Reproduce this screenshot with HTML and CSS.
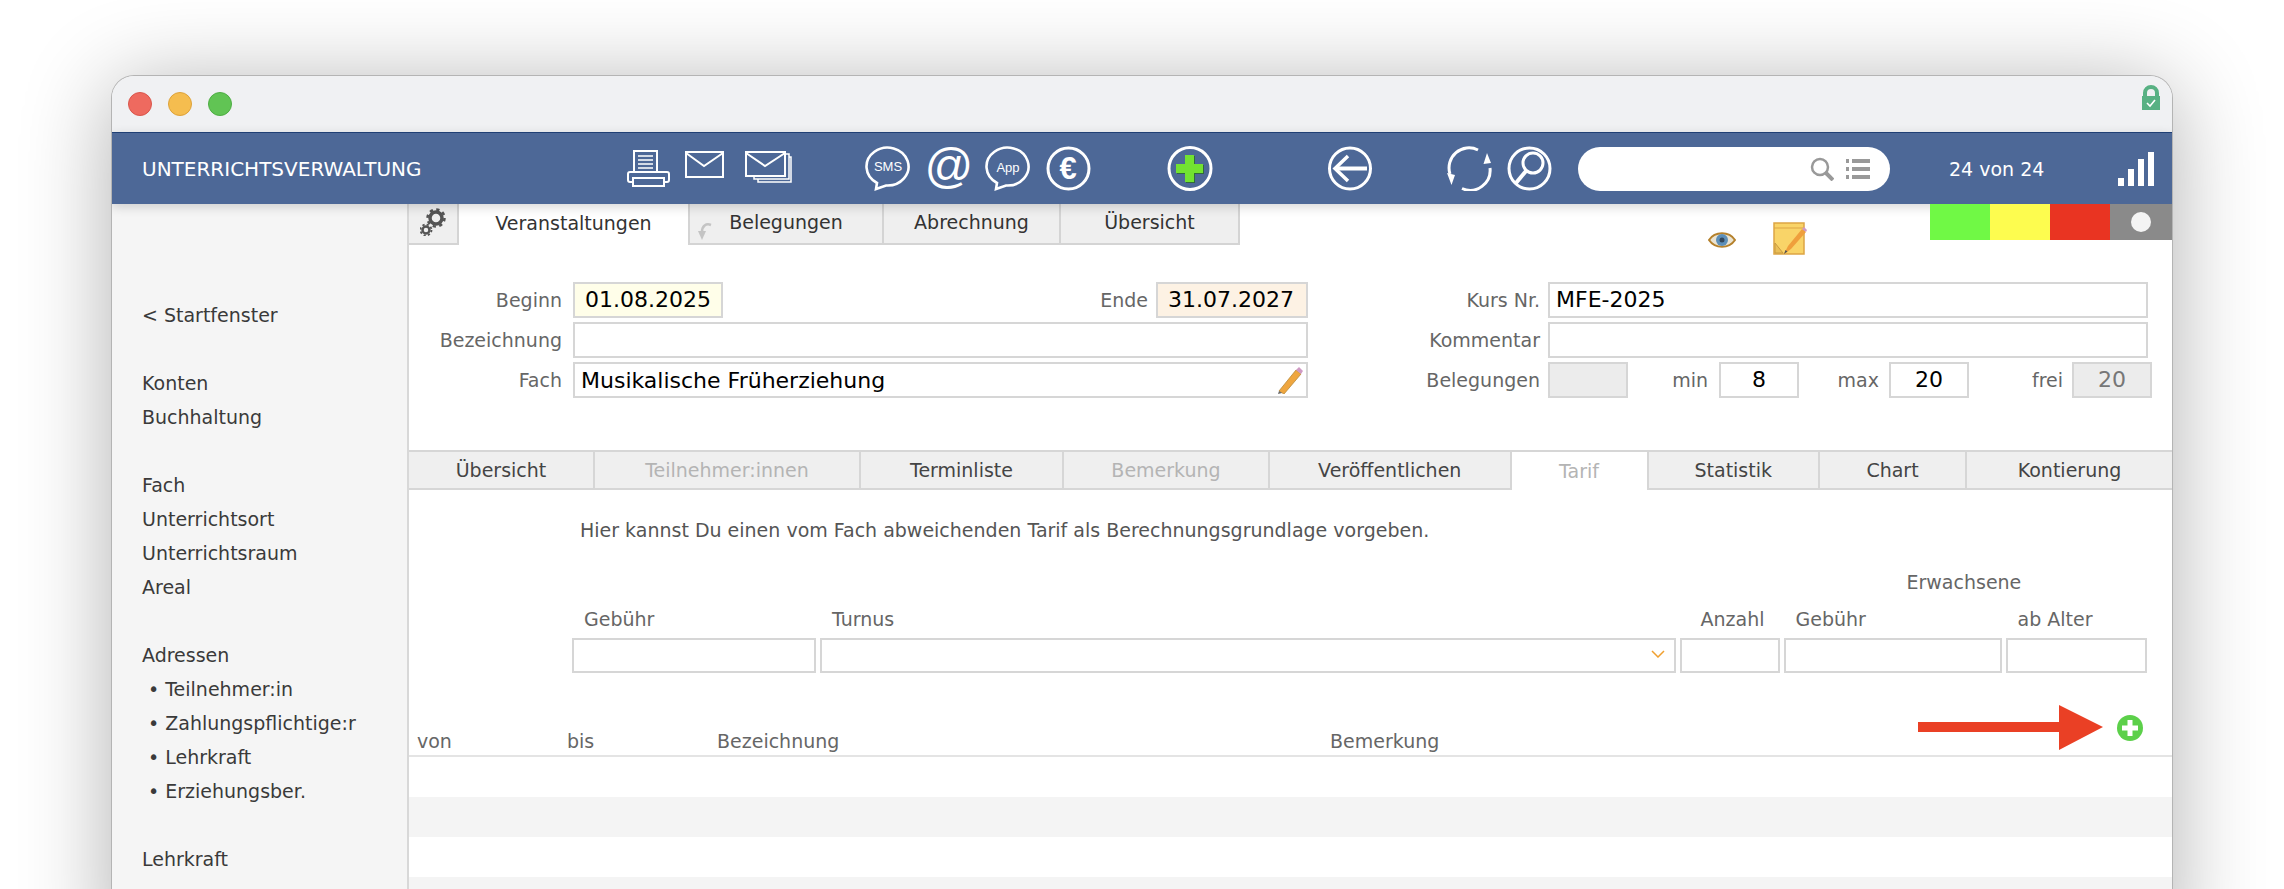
FILE: index.html
```html
<!DOCTYPE html>
<html lang="de">
  <head>
    <meta charset="UTF-8" />
    <title>Unterrichtsverwaltung</title>
    <link rel="stylesheet" href="styles.css">
  </head>
  <body>
    <div class="window">
      <div class="titlebar">
        <div class="lights"><span class="red"></span><span class="yellow"></span><span class="green"></span></div>
        <svg class="lock" width="18" height="25" viewBox="0 0 18 25">
          <path d="M3 12V8a6 6 0 0 1 12 0v4" fill="none" stroke="#58b183" stroke-width="4"/>
          <rect y="11" width="18" height="14" fill="#58b183"/>
          <path d="M5 18l3 3 5-6" fill="none" stroke="#fff" stroke-width="1.6"/>
        </svg>
      </div>

      <div class="header">
        <div class="app-title">UNTERRICHTSVERWALTUNG</div>

        <div class="icons group-print">
          <svg width="43" height="37" viewBox="0 0 43 37" fill="none" stroke="#fff" stroke-width="2">
            <path d="M7 22V1h23v21"/>
            <path d="M11 6h15M11 10h15M11 14h15M11 18h15" stroke-width="1.6"/>
            <rect x="1" y="22" width="41" height="10" rx="2"/>
            <rect x="6" y="28" width="31" height="8" fill="#4d6897"/>
          </svg>
          <svg width="39" height="27" viewBox="0 0 39 27" fill="none" stroke="#fff" stroke-width="2">
            <rect x="1" y="1" width="37" height="25"/>
            <path d="M1 2l18 13L38 2"/>
          </svg>
          <svg class="mail-stack" width="47" height="32" viewBox="0 0 47 32" fill="none" stroke="#fff" stroke-width="2">
            <path d="M41 3h3v25H9v-2M44 6h2v25H13v-3" stroke-width="1.5"/>
            <rect x="1" y="1" width="39" height="24" fill="#4d6897"/>
            <path d="M1 2l19 13L40 2"/>
          </svg>
        </div>

        <div class="icons group-contact">
          <svg width="46" height="45" viewBox="0 0 46 45">
            <path d="M12 37A21 19 0 1 1 21 39.500L11 43Z" fill="none" stroke="#fff" stroke-width="2.600"/>
            <text x="23" y="25" text-anchor="middle" class="bubble-text">SMS</text>
          </svg>
          <svg width="44" height="45" viewBox="0 0 44 45">
            <text x="22" y="36" text-anchor="middle" class="at-sign">@</text>
          </svg>
          <svg width="46" height="45" viewBox="0 0 46 45">
            <path d="M12 37A21 19 0 1 1 21 39.500L11 43Z" fill="none" stroke="#fff" stroke-width="2.600"/>
            <text x="23" y="26" text-anchor="middle" class="bubble-text">App</text>
          </svg>
          <svg width="45" height="45" viewBox="0 0 45 45">
            <circle cx="22.500" cy="22.500" r="20.500" fill="none" stroke="#fff" stroke-width="3"/>
            <text x="22" y="33" text-anchor="middle" class="euro">€</text>
          </svg>
        </div>

        <svg class="icon-add" width="46" height="45" viewBox="0 0 46 45">
          <circle cx="23" cy="22.500" r="21" fill="none" stroke="#fff" stroke-width="3"/>
          <path d="M19 10h9v9h9v9h-9v9h-9v-9h-9v-9h9z" fill="#2f6b3a"/>
          <path d="M18 9h9v9h9v9h-9v9h-9v-9h-9v-9h9z" fill="#72e231"/>
        </svg>

        <svg class="icon-back" width="44" height="45" viewBox="0 0 44 45" fill="none" stroke="#fff">
          <circle cx="22" cy="22.500" r="20.500" stroke-width="3"/>
          <path d="M20 10L7 22.500 20 35" stroke-width="3.500"/>
          <path d="M9 22.500h30" stroke-width="4"/>
        </svg>

        <svg class="icon-refresh" width="45" height="45" viewBox="0 0 45 45">
          <path d="M31 4A20 20 0 0 0 3 28" fill="none" stroke="#fff" stroke-width="3"/>
          <path d="M43 22A20 20 0 0 1 15 42.500" fill="none" stroke="#fff" stroke-width="3"/>
          <path d="M0 27l8 2-3.500 10zM36.500 18L40 7l4 10z" fill="#fff"/>
        </svg>

        <svg class="icon-find" width="45" height="45" viewBox="0 0 45 45" fill="none" stroke="#fff">
          <circle cx="22.500" cy="22.500" r="20.500" stroke-width="3"/>
          <circle cx="26" cy="17" r="10" stroke-width="3"/>
          <path d="M19 25L9 37" stroke-width="4"/>
        </svg>

        <div class="search">
          <svg width="24" height="24" viewBox="0 0 24 24" fill="none" stroke="#999">
            <circle cx="10" cy="10" r="8" stroke-width="2.500"/>
            <path d="M15.500 15.500L23 23" stroke-width="4"/>
          </svg>
          <svg width="24" height="20" viewBox="0 0 24 20" fill="#999">
            <rect y="0" width="3" height="4"/><rect x="6" y="0" width="18" height="4"/>
            <rect y="8" width="3" height="4"/><rect x="6" y="8" width="18" height="4"/>
            <rect y="16" width="3" height="4"/><rect x="6" y="16" width="18" height="4"/>
          </svg>
        </div>

        <div class="count">24 von 24</div>

        <svg class="icon-signal" width="37" height="34" viewBox="0 0 37 34" fill="#fff">
          <rect x="0" y="26" width="6" height="8"/>
          <rect x="10" y="17" width="6" height="17"/>
          <rect x="20" y="7" width="6" height="27"/>
          <rect x="30" y="0" width="6" height="34"/>
        </svg>
      </div>

      <div class="body">
        <div class="sidebar">
          <div class="nav-item">&lt; Startfenster</div>
          <div class="nav-gap"></div>
          <div class="nav-item">Konten</div>
          <div class="nav-item">Buchhaltung</div>
          <div class="nav-gap"></div>
          <div class="nav-item">Fach</div>
          <div class="nav-item">Unterrichtsort</div>
          <div class="nav-item">Unterrichtsraum</div>
          <div class="nav-item">Areal</div>
          <div class="nav-gap"></div>
          <div class="nav-item">Adressen</div>
          <div class="nav-item sub">Teilnehmer:in</div>
          <div class="nav-item sub">Zahlungspflichtige:r</div>
          <div class="nav-item sub">Lehrkraft</div>
          <div class="nav-item sub">Erziehungsber.</div>
          <div class="nav-gap"></div>
          <div class="nav-item">Lehrkraft</div>
        </div>

        <div class="main">
          <div class="top-row">
            <div class="main-tabs">
              <div class="tab gear-tab">
                <svg width="26" height="28" viewBox="0 0 26 28" fill="none" stroke="#555">
                  <circle cx="16" cy="10" r="6" stroke-width="3.500"/>
                  <circle cx="16" cy="10" r="8.500" stroke-width="2.500" stroke-dasharray="3.300 3.370"/>
                  <circle cx="6" cy="22" r="3.500" stroke-width="2.500"/>
                  <circle cx="6" cy="22" r="5.500" stroke-width="1.800" stroke-dasharray="2.200 2.120"/>
                </svg>
              </div>
              <div class="tab active">Veranstaltungen</div>
              <div class="tab">
                <svg class="tab-arrow" width="15" height="18" viewBox="0 0 15 18" fill="none">
                  <path d="M14 3C9 1 5 4 5 10" stroke="#c4c4c4" stroke-width="2.500"/>
                  <path d="M1 9h8l-4 9z" fill="#c4c4c4"/>
                </svg>
                Belegungen
              </div>
              <div class="tab">Abrechnung</div>
              <div class="tab">Übersicht</div>
            </div>

            <svg class="icon-eye" width="28" height="18" viewBox="0 0 28 18">
              <path d="M1 9C7 0 21 0 27 9 21 18 7 18 1 9z" fill="#e9e3d2" stroke="#b5812c" stroke-width="2"/>
              <circle cx="14" cy="9" r="6" fill="#5d8fb8"/>
              <circle cx="14" cy="9" r="2.500" fill="#33475c"/>
            </svg>

            <svg class="icon-note" width="34" height="33" viewBox="0 0 34 33">
              <rect x="1" y="1" width="30" height="31" fill="#f9d468" stroke="#dda544" stroke-width="1.500"/>
              <path d="M1 6h30" stroke="#dda544"/>
              <path d="M2 21l8 10H2z" fill="#eabf58" stroke="#c99a40"/>
              <path d="M11 32l4-8 14-17 4 3-15 17z" fill="#ef9f3c"/>
              <path d="M29 7l2-2 3 3-1 2z" fill="#cf9ac4"/>
              <path d="M11 32l1.500-4 2 1.600z" fill="#555"/>
            </svg>

            <div class="status">
              <span class="st-green"></span><span class="st-yellow"></span><span class="st-red"></span>
              <span class="st-gray"><i></i></span>
            </div>
          </div>

          <div class="form">
            <div class="form-left">
              <div class="row">
                <label class="lbl">Beginn</label>
                <div class="field date begin">01.08.2025</div>
                <label class="lbl-end">Ende</label>
                <div class="field date end">31.07.2027</div>
              </div>
              <div class="row">
                <label class="lbl">Bezeichnung</label>
                <div class="field grow"></div>
              </div>
              <div class="row">
                <label class="lbl">Fach</label>
                <div class="field grow fach">
                  Musikalische Früherziehung
                  <svg width="26" height="28" viewBox="0 0 26 28">
                    <path d="M2 25L19 4l5 4L7 28z" fill="#efa63f" stroke="#b98a3a" stroke-width=".8"/>
                    <path d="M19 4l3-3 4 4-2 3z" fill="#cf9ac4"/>
                    <path d="M2 25l-1 3 4-1z" fill="#666"/>
                  </svg>
                </div>
              </div>
            </div>

            <div class="form-right">
              <div class="row">
                <label class="lbl-r">Kurs Nr.</label>
                <div class="field grow">MFE-2025</div>
              </div>
              <div class="row">
                <label class="lbl-r">Kommentar</label>
                <div class="field grow"></div>
              </div>
              <div class="row">
                <label class="lbl-r">Belegungen</label>
                <div class="field readonly small"></div>
                <label class="lbl-min">min</label>
                <div class="field small num">8</div>
                <label class="lbl-max">max</label>
                <div class="field small num">20</div>
                <label class="lbl-frei">frei</label>
                <div class="field readonly small num">20</div>
              </div>
            </div>
          </div>

          <div class="sub-tabs">
            <div class="stab">Übersicht</div>
            <div class="stab off">Teilnehmer:innen</div>
            <div class="stab">Terminliste</div>
            <div class="stab off">Bemerkung</div>
            <div class="stab">Veröffentlichen</div>
            <div class="stab current">Tarif</div>
            <div class="stab">Statistik</div>
            <div class="stab">Chart</div>
            <div class="stab">Kontierung</div>
          </div>

          <p class="hint">Hier kannst Du einen vom Fach abweichenden Tarif als Berechnungsgrundlage vorgeben.</p>

          <div class="tarif">
            <div class="cap adult">Erwachsene</div>
            <div class="cap">Gebühr</div>
            <div class="cap">Turnus</div>
            <div class="cap anzahl">Anzahl</div>
            <div class="cap">Gebühr</div>
            <div class="cap">ab Alter</div>
            <div class="field"></div>
            <div class="field select">
              <svg width="14" height="8" viewBox="0 0 14 8" fill="none" stroke="#f0a030" stroke-width="1.500"><path d="M1 1l6 6 6-6"/></svg>
            </div>
            <div class="field"></div>
            <div class="field"></div>
            <div class="field"></div>
          </div>

          <div class="list-head">
            <span>von</span>
            <span>bis</span>
            <span>Bezeichnung</span>
            <span>Bemerkung</span>
            <div class="add-cell">
              <svg width="185" height="45" viewBox="0 0 185 45">
                <path d="M0 17h141V0l44 22-44 23V27H0z" fill="#ea4025"/>
              </svg>
              <svg width="26" height="26" viewBox="0 0 26 26">
                <circle cx="13" cy="13" r="13" fill="#5cd04a"/>
                <path d="M10.500 5h5v5.500H21v5h-5.500V21h-5v-5.500H5v-5h5.500z" fill="#fff"/>
              </svg>
            </div>
          </div>

          <div class="list-row"></div>
          <div class="list-row alt"></div>
          <div class="list-row"></div>
          <div class="list-row alt"></div>
        </div>
      </div>
    </div>
  </body>
</html>
```

FILE: styles.css
```css
* {
  box-sizing: border-box;
}

html,
body {
  margin: 0;
  height: 889px;
  overflow: hidden;
  background: #fff;
}

body {
  padding: 76px 112px 0;
  font-family: 'DejaVu Sans', Verdana, sans-serif;
  font-size: 19px;
  color: #333;
}

svg {
  display: block;
  flex: none;
}

.window {
  height: 880px;
  border-radius: 22px 22px 0 0;
  overflow: hidden;
}

.window {
  box-shadow: 0 0 0 1px #b4b4b4, 0 10px 90px rgba(0, 0, 0, 0.32);
}

/* title bar */
.titlebar {
  height: 56px;
  background: #f0f1f3;
  display: flex;
  justify-content: space-between;
  align-items: center;
  padding: 0 12px 0 16px;
}

.lights {
  display: flex;
  gap: 16px;
}

.lights span {
  width: 24px;
  height: 24px;
  border-radius: 50%;
}

.lights .red {
  background: #ee6a5f;
  border: 1px solid #d9564c;
}
.lights .yellow {
  background: #f5bd4f;
  border: 1px solid #dda23a;
}
.lights .green {
  background: #61c454;
  border: 1px solid #4ead44;
}

.lock {
  align-self: flex-start;
  margin-top: 9px;
}

/* blue toolbar */
.header {
  height: 72px;
  background: #4d6897;
  border-top: 1px solid #1f3f74;
  display: flex;
  align-items: center;
  padding-left: 30px;
  color: #fff;
  position: relative;
  z-index: 2;
  box-shadow: 0 3px 10px rgba(0, 0, 0, 0.16);
}

.app-title {
  width: 485px;
  flex: none;
  font-size: 20px;
  white-space: nowrap;
}

.icons {
  display: flex;
  align-items: center;
}

.group-print {
  gap: 15px;
  width: 165px;
}

.group-print svg:nth-child(2) {
  margin-bottom: 9px;
}

.group-print svg:nth-child(3) {
  margin-left: 6px;
  margin-bottom: 3px;
}

.group-contact {
  gap: 15px;
  margin-left: 73px;
}

.bubble-text {
  font-family: 'Liberation Sans', sans-serif;
  font-size: 13px;
  fill: #fff;
}

.at-sign {
  font-family: 'Liberation Sans', sans-serif;
  font-style: italic;
  font-size: 48px;
  fill: #fff;
}

.euro {
  font-family: 'Liberation Sans', sans-serif;
  font-weight: bold;
  font-size: 31px;
  fill: #fff;
}

.icon-add {
  margin-left: 76px;
}
.icon-back {
  margin-left: 115px;
}
.icon-refresh {
  margin-left: 75px;
}
.icon-find {
  margin-left: 15px;
}

.search {
  width: 312px;
  height: 44px;
  margin-left: 26px;
  background: #fff;
  border-radius: 22px;
  display: flex;
  justify-content: flex-end;
  align-items: center;
  gap: 12px;
  padding-right: 20px;
}

.count {
  margin-left: 59px;
  width: 169px;
  flex: none;
  font-size: 19px;
}

/* sidebar + content */
.body {
  display: flex;
  height: 752px;
}

.sidebar {
  width: 297px;
  flex: none;
  background: #f5f5f5;
  border-right: 2px solid #d8d8d8;
  padding: 94px 0 0 30px;
  color: #3a3a3a;
}

.nav-item,
.nav-gap {
  height: 34px;
  line-height: 34px;
  white-space: nowrap;
}

.nav-item.sub {
  padding-left: 6px;
}

.nav-item.sub::before {
  content: '•';
  margin-right: 6px;
}

.main {
  flex: 1;
  min-width: 0;
  background: #fff;
}

.top-row {
  height: 41px;
  display: flex;
  align-items: flex-start;
}

.main-tabs {
  display: grid;
  grid-template-columns: 50px 231px 194px 177px 179px;
  height: 41px;
  flex: none;
}

.tab {
  display: flex;
  align-items: center;
  justify-content: center;
  background: #efefef;
  border-right: 2px solid #d4d4d4;
  border-bottom: 2px solid #d4d4d4;
  font-size: 19px;
  position: relative;
  padding-bottom: 3px;
}

.tab.active {
  background: #fff;
  border-bottom: 0;
  border-right: 2px solid #d4d4d4;
}

.tab-arrow {
  position: absolute;
  left: 7px;
  top: 18px;
}

.icon-eye {
  margin: 27px 0 0 468px;
}

.icon-note {
  margin: 18px 0 0 37px;
}

.status {
  display: flex;
  height: 36px;
  margin-left: auto;
  position: relative;
  z-index: 3;
}

.status span {
  width: 60px;
}

.st-green {
  background: #70f945;
}
.st-yellow {
  background: #fdfc4f;
}
.st-red {
  background: #e93422;
}

.status .st-gray {
  width: 62px;
  background: #8a8a8a;
  display: flex;
  align-items: center;
  justify-content: center;
  padding-left: 0;
}

.st-gray i {
  width: 20px;
  height: 20px;
  border-radius: 50%;
  background: #f4f4f4;
}

/* upper form */
.form {
  height: 205px;
  padding-top: 37px;
  display: flex;
  font-size: 19px;
}

.form-left {
  width: 899px;
  flex: none;
}

.form-right {
  width: 840px;
  flex: none;
}

.row {
  display: flex;
  align-items: center;
  height: 36px;
  margin-bottom: 4px;
  color: #666;
}

.row label {
  flex: none;
  text-align: right;
  white-space: nowrap;
}

.lbl {
  width: 153px;
  margin-right: 11px;
}
.lbl-end {
  margin-left: auto;
  margin-right: 8px;
}
.lbl-r {
  width: 232px;
  margin-right: 8px;
}
.lbl-min {
  width: 80px;
  margin-right: 11px;
}
.lbl-max {
  width: 80px;
  margin-right: 10px;
}
.lbl-frei {
  width: 94px;
  margin-right: 9px;
}

.field {
  height: 36px;
  border: 2px solid #d6d6d6;
  background: #fff;
  color: #000;
  font-size: 22px;
  line-height: 31px;
  padding: 0 6px;
  white-space: nowrap;
}

.field.grow {
  flex: 1;
}

.field.date {
  flex: none;
  padding: 0 10px;
  overflow: hidden;
}

.begin {
  width: 150px;
  background: #fffee9;
}

.end {
  width: 152px;
  background: #fdf2e4;
}

.fach {
  display: flex;
  justify-content: space-between;
  align-items: center;
  padding-right: 3px;
}

.small {
  width: 80px;
  flex: none;
}

.num {
  text-align: center;
}

.readonly {
  background: #ececec;
  color: #777;
}

/* lower tabs */
.sub-tabs {
  display: grid;
  grid-template-columns: 186px 266px 203px 206px 241.500px 137px 171.500px 147px 205px;
  height: 40px;
  border-top: 2px solid #d6d6d6;
}

.stab {
  background: #efefef;
  border-right: 2px solid #d6d6d6;
  border-bottom: 2px solid #d6d6d6;
  display: flex;
  align-items: center;
  justify-content: center;
  color: #444;
}

.stab:last-child {
  border-right: 0;
}

.stab.off {
  color: #b4b4b4;
}

.stab.current {
  background: #fff;
  border-bottom: 0;
  color: #b4b4b4;
}

.hint {
  margin: 0;
  padding: 28px 0 0 171px;
  height: 74px;
  line-height: 24px;
  color: #555;
}

/* tarif row */
.tarif {
  margin: 0 0 0 163px;
  display: grid;
  grid-template-columns: 244px 855.500px 100px 218px 141px;
  grid-template-rows: 37px 37px 35px;
  column-gap: 4px;
  color: #666;
}

.cap {
  line-height: 37px;
  padding-left: 12px;
  white-space: nowrap;
}

.adult {
  grid-column: 4 / 6;
  padding-left: 123px;
}

.cap.anzahl {
  padding-left: 21px;
}

.tarif .field {
  height: 35px;
}

.select {
  display: flex;
  justify-content: flex-end;
  align-items: flex-start;
  padding: 10px 9px 0 0;
}

/* list */
.list-head {
  height: 84px;
  border-bottom: 2px solid #e4e4e4;
  display: grid;
  grid-template-columns: 150px 150px 613px 1fr auto;
  align-items: end;
  padding: 0 29px 0 8px;
  color: #666;
  line-height: 28px;
}

.add-cell {
  display: flex;
  align-items: center;
  gap: 14px;
  padding-bottom: 5px;
}

.list-row {
  height: 40px;
}

.list-row.alt {
  background: #f4f4f4;
}
```
